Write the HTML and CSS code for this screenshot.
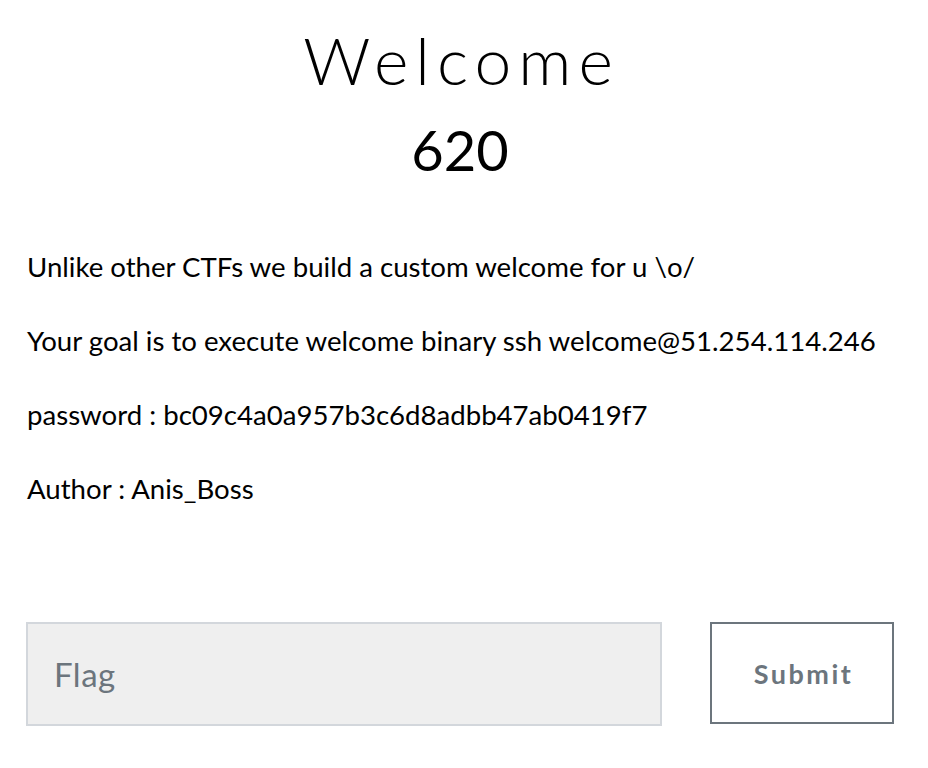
FILE: index.html
```html
<!DOCTYPE html>
<html lang="en">
<head>
<meta charset="utf-8">
<title>Welcome</title>
<link rel="stylesheet" href="styles.css">
</head>
<body>
<main class="challenge">
  <header class="challenge-head">
    <h2 class="challenge-name">Welcome</h2>
    <h3 class="challenge-value">620</h3>
  </header>
  <section class="challenge-desc">
    <p>Unlike other CTFs we build a custom welcome for u \o/</p>
    <p>Your goal is to execute welcome binary ssh welcome@51.254.114.246</p>
    <p>password : bc09c4a0a957b3c6d8adbb47ab0419f7</p>
    <p>Author : Anis_Boss</p>
  </section>
  <form class="flag-form">
    <input class="flag-input" type="text" placeholder="Flag">
    <button class="flag-submit" type="button">Submit</button>
  </form>
</main>
</body>
</html>
```

FILE: styles.css
```css
html, body {
  margin: 0;
  padding: 0;
  background: #ffffff;
}

body {
  font-family: Lato, "Liberation Sans", sans-serif;
  color: #000000;
}

.challenge {
  padding: 20px 34px 0 26px;
}

.challenge-head {
  text-align: center;
}

.challenge-name {
  margin: 0;
  padding-left: 3px;
  font-family: Lato, "Liberation Sans", sans-serif;
  font-weight: 300;
  font-size: 66px;
  letter-spacing: 7px;
  line-height: 80px;
}

.challenge-value {
  margin: 13px 0 0 0;
  font-weight: 400;
  font-size: 56px;
  line-height: 74px;
}

.challenge-desc {
  margin-top: 61px;
  padding-left: 1px;
}

.challenge-desc p {
  margin: 0 0 36px 0;
  font-size: 27.6px;
  line-height: 38px;
}

.flag-form {
  display: grid;
  grid-template-columns: 636px 184px;
  column-gap: 48px;
  align-items: start;
  margin-top: 114px;
}

.flag-input {
  box-sizing: border-box;
  height: 104px;
  margin: 0;
  padding: 0 26px;
  border: 2px solid #d3d7dc;
  border-radius: 0;
  background: #efefef;
  font-family: Lato, "Liberation Sans", sans-serif;
  font-size: 33px;
  letter-spacing: 0.5px;
  color: #6c757d;
  outline: none;
}

.flag-input::placeholder {
  color: #6c757d;
  opacity: 1;
}

.flag-submit {
  box-sizing: border-box;
  height: 102px;
  margin: 0;
  padding: 0 0 0 3px;
  border: 2px solid #6c757d;
  border-radius: 0;
  background: #ffffff;
  font-family: Lato, "Liberation Sans", sans-serif;
  font-weight: 700;
  font-size: 27px;
  letter-spacing: 2.5px;
  color: #6c757d;
}
```
